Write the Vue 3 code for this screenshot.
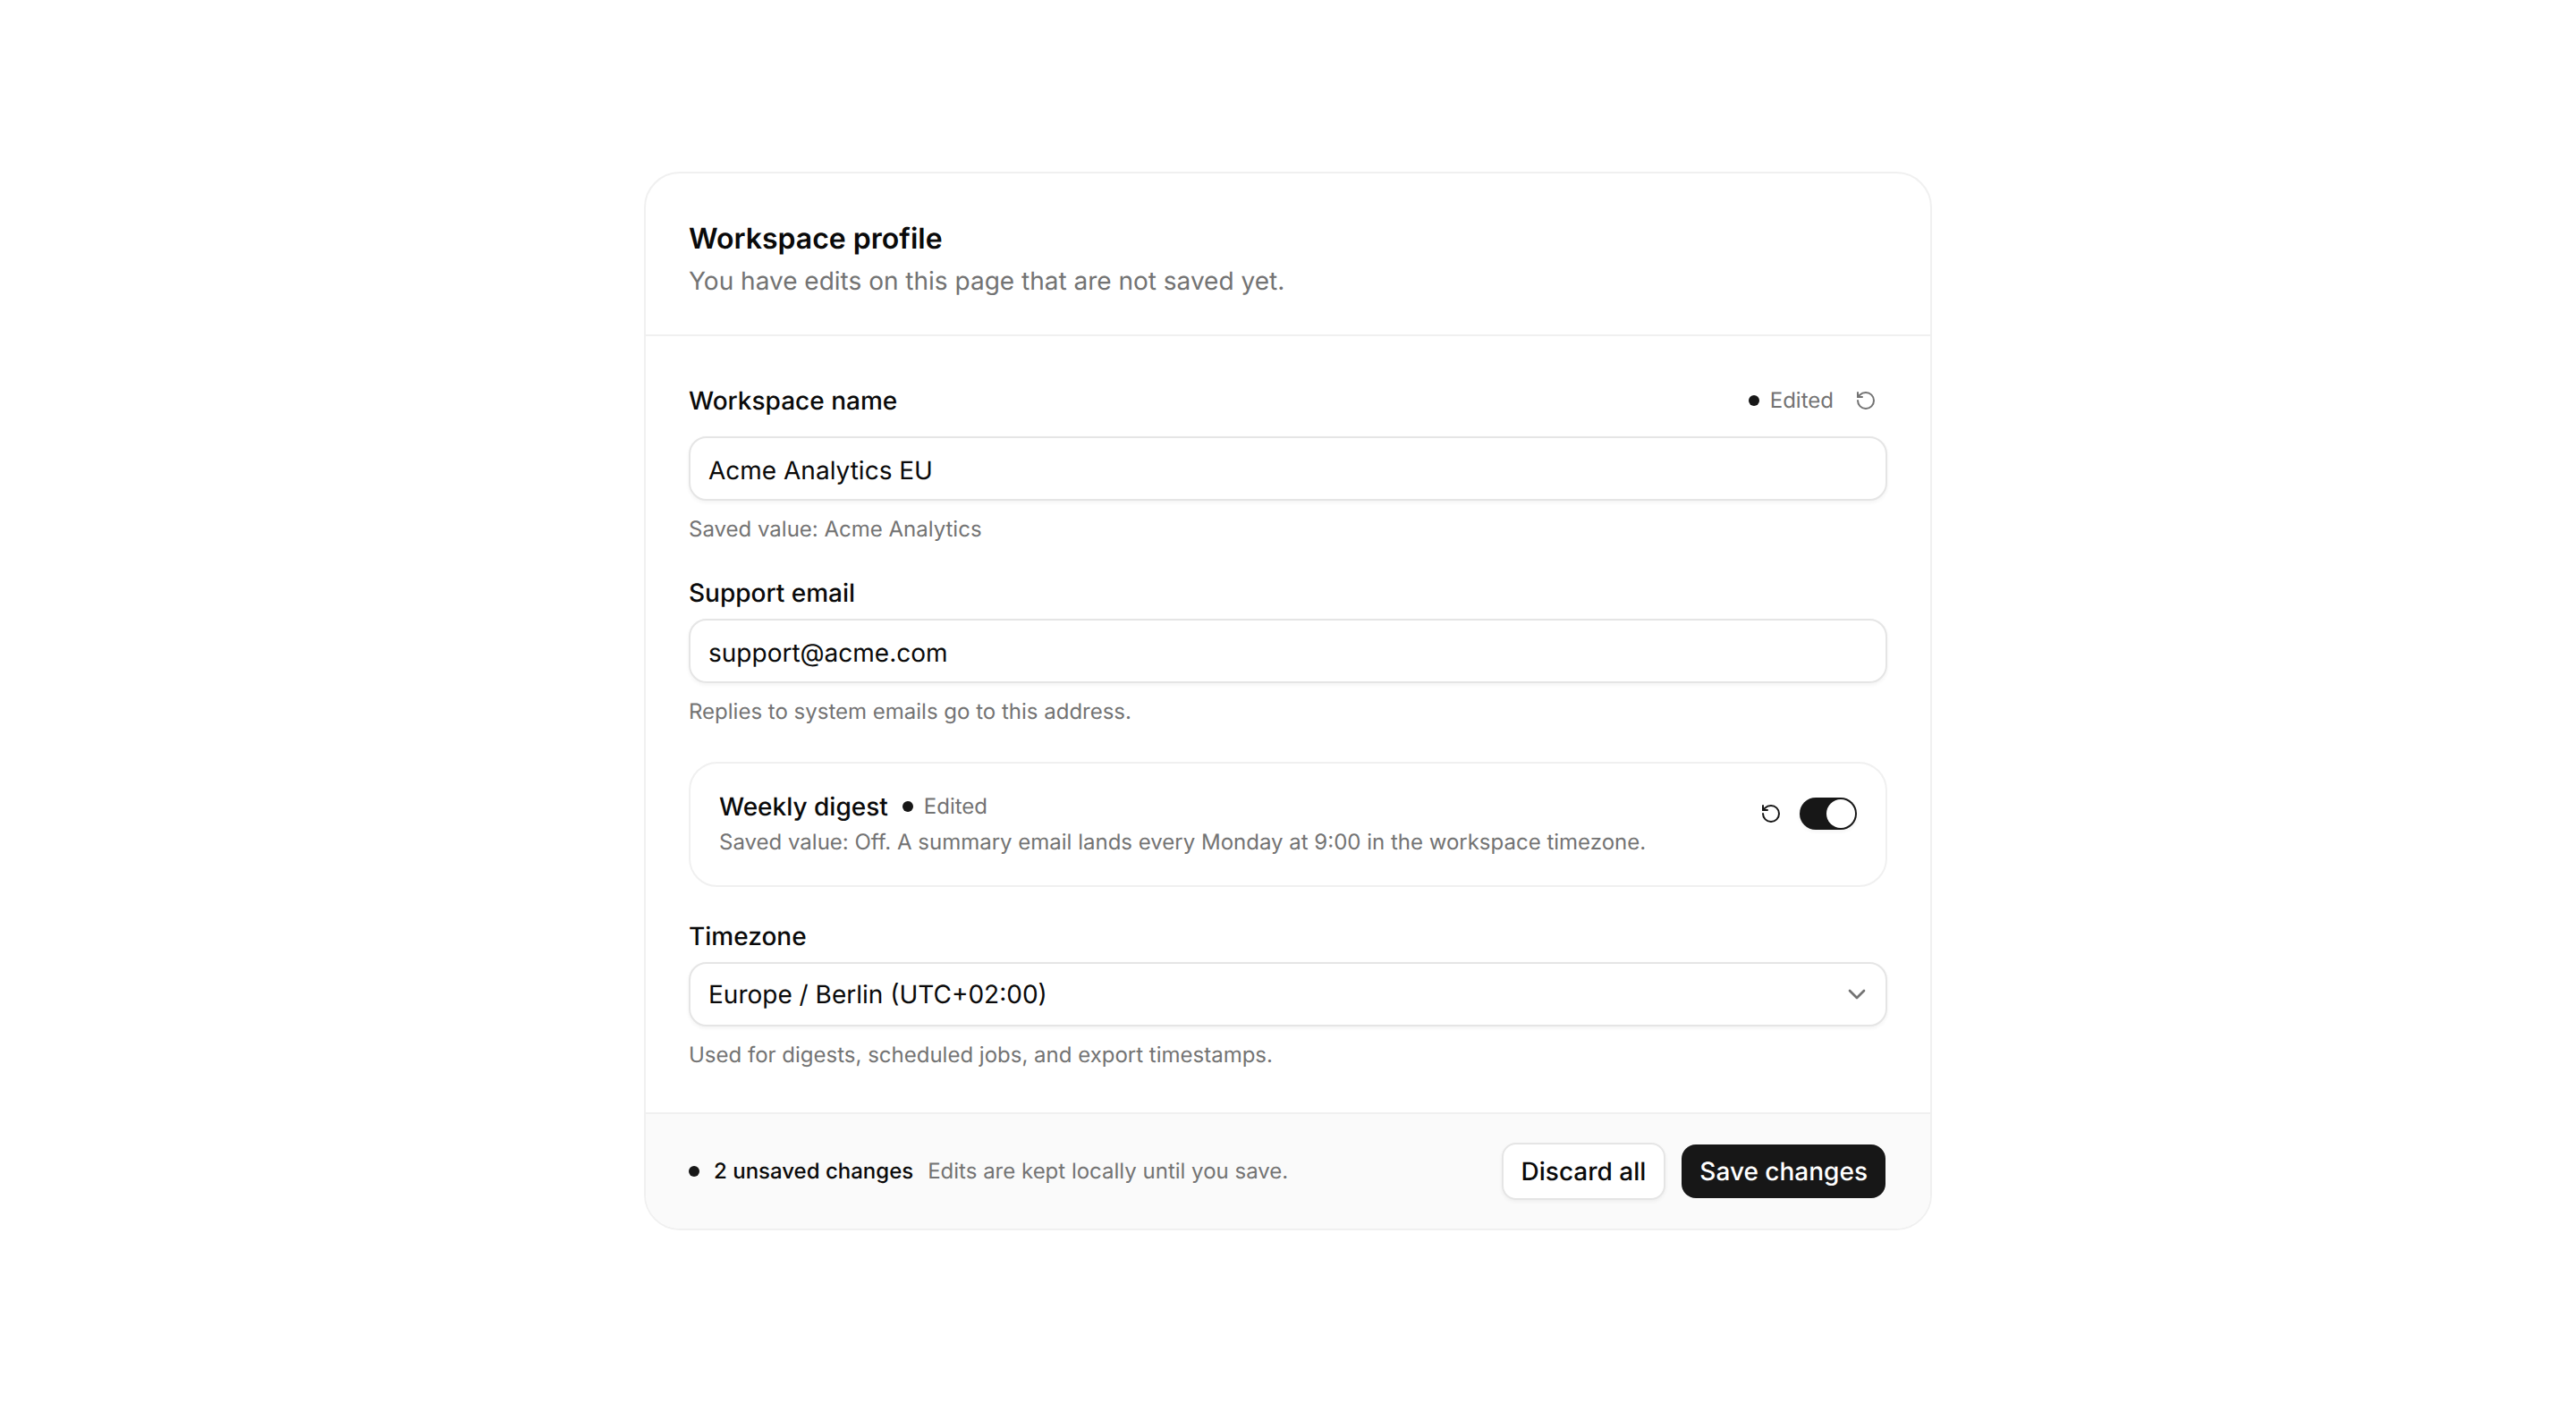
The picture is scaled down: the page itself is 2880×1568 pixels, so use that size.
<template>
  <div class="page">
    <section class="card">
      <header class="card-head">
        <h1 class="title">Workspace profile</h1>
        <p class="subtitle">You have edits on this page that are not saved yet.</p>
      </header>

      <div class="card-body">
        <div class="field">
          <div class="label-row">
            <label class="label">Workspace name</label>
            <div class="edited-wrap">
              <span class="dot"></span>
              <span class="edited">Edited</span>
              <button class="reset muted" type="button" aria-label="Reset">
                <svg viewBox="0 0 24 24" class="reset-icon">
                  <path d="M3 12a9 9 0 1 0 9-9 9.75 9.75 0 0 0-6.74 2.74L3 8" />
                  <path d="M3 3v5h5" />
                </svg>
              </button>
            </div>
          </div>
          <input class="input text-input" type="text" value="Acme Analytics EU" />
          <p class="help">Saved value: Acme Analytics</p>
        </div>

        <div class="field">
          <label class="label label-plain">Support email</label>
          <input class="input text-input" type="text" value="support@acme.com" />
          <p class="help">Replies to system emails go to this address.</p>
        </div>

        <div class="digest">
          <div class="digest-text">
            <div class="digest-head">
              <span class="digest-title">Weekly digest</span>
              <span class="dot"></span>
              <span class="edited">Edited</span>
            </div>
            <p class="digest-sub">Saved value: Off. A summary email lands every Monday at 9:00 in the workspace timezone.</p>
          </div>
          <div class="digest-controls">
            <button class="reset" type="button" aria-label="Reset">
              <svg viewBox="0 0 24 24" class="reset-icon">
                <path d="M3 12a9 9 0 1 0 9-9 9.75 9.75 0 0 0-6.74 2.74L3 8" />
                <path d="M3 3v5h5" />
              </svg>
            </button>
            <button class="toggle" type="button" :class="{ on: digest }" @click="digest = !digest">
              <span class="thumb"></span>
            </button>
          </div>
        </div>

        <div class="field">
          <label class="label label-plain">Timezone</label>
          <div class="select-wrap">
            <select class="input select">
              <option>Europe / Berlin (UTC+02:00)</option>
            </select>
            <svg class="chevron" viewBox="0 0 24 24">
              <path d="m6 9 6 6 6-6" />
            </svg>
          </div>
          <p class="help">Used for digests, scheduled jobs, and export timestamps.</p>
        </div>
      </div>

      <footer class="card-foot">
        <div class="foot-status">
          <span class="dot"></span>
          <span class="foot-count">2 unsaved changes</span>
          <span class="foot-note">Edits are kept locally until you save.</span>
        </div>
        <div class="foot-actions">
          <button class="btn btn-outline" type="button">Discard all</button>
          <button class="btn btn-dark" type="button">Save changes</button>
        </div>
      </footer>
    </section>
  </div>
</template>

<script setup>
import { ref } from 'vue'

const digest = ref(true)
</script>

<style>
html,
body {
  margin: 0;
  background: #fff;
}
</style>

<style scoped>
.page {
  min-height: 1568px;
  display: flex;
  align-items: center;
  justify-content: center;
  font-family: Inter, "Liberation Sans", sans-serif;
  text-rendering: geometricPrecision;
  color: #171717;
}

.card {
  width: 1440px;
  box-sizing: border-box;
  border: 2px solid #f0f0f0;
  border-radius: 40px;
  overflow: hidden;
  background: #fff;
}

.card-head {
  padding: 48px 48px 38px;
  border-bottom: 2px solid #f0f0f0;
}

.title {
  margin: 0;
  font-size: 32px;
  line-height: 50px;
  font-weight: 600;
  color: #0a0a0a;
}

.subtitle {
  margin: 0;
  font-size: 28px;
  line-height: 44px;
  color: #737373;
}

.card-body {
  padding: 48px;
}

.field + .field,
.digest + .field {
  margin-top: 36px;
}

.label-row {
  display: flex;
  align-items: center;
  justify-content: space-between;
  height: 48px;
  margin-bottom: 16px;
}

.label {
  font-size: 28px;
  line-height: 38px;
  font-weight: 500;
  color: #0a0a0a;
}

.label-plain {
  display: block;
  margin-bottom: 10px;
}

.edited-wrap {
  display: flex;
  align-items: center;
}

.dot {
  flex: none;
  width: 12px;
  height: 12px;
  border-radius: 50%;
  background: #171717;
}

.edited {
  margin-left: 12px;
  font-size: 24px;
  line-height: 32px;
  color: #737373;
}

.reset {
  display: flex;
  align-items: center;
  justify-content: center;
  width: 48px;
  height: 48px;
  margin-left: 12px;
  padding: 0;
  border: 0;
  background: none;
  color: #171717;
}

.reset.muted {
  color: #737373;
}

.reset-icon {
  width: 24px;
  height: 24px;
  fill: none;
  stroke: currentColor;
  stroke-width: 2;
  stroke-linecap: round;
  stroke-linejoin: round;
}

.input {
  display: block;
  width: 100%;
  height: 72px;
  box-sizing: border-box;
  padding: 0 20px;
  border: 2px solid #e5e5e5;
  border-radius: 20px;
  background: #fff;
  box-shadow: 0 2px 4px rgba(0, 0, 0, 0.05);
  font-family: inherit;
  font-size: 28px;
  text-rendering: geometricPrecision;
  color: #0a0a0a;
  outline: none;
}

.text-input {
  padding-top: 3px;
}

.select {
  appearance: none;
}

.select-wrap {
  position: relative;
}

.chevron {
  position: absolute;
  top: 20px;
  right: 18px;
  width: 32px;
  height: 32px;
  fill: none;
  stroke: #737373;
  stroke-width: 2;
  stroke-linecap: round;
  stroke-linejoin: round;
}

.help {
  margin: 16px 0 0;
  font-size: 24px;
  line-height: 32px;
  color: #737373;
}

.digest {
  display: flex;
  justify-content: space-between;
  align-items: flex-start;
  margin-top: 40px;
  padding: 32px;
  border: 2px solid #f0f0f0;
  border-radius: 32px;
}

.digest-head {
  display: flex;
  align-items: center;
  height: 32px;
}

.digest-title {
  margin-right: 16px;
  font-size: 28px;
  font-weight: 500;
  color: #0a0a0a;
}

.digest-sub {
  margin: 8px 0 0;
  font-size: 24px;
  line-height: 32px;
  color: #737373;
}

.digest-controls {
  display: flex;
  align-items: center;
  gap: 8px;
}

.digest-controls .reset {
  margin-left: 0;
}

.toggle {
  display: flex;
  align-items: center;
  justify-content: flex-start;
  width: 64px;
  height: 36px;
  padding: 2px;
  border: 0;
  border-radius: 18px;
  background: #171717;
  box-shadow: 0 2px 4px rgba(0, 0, 0, 0.05);
}

.toggle.on {
  justify-content: flex-end;
}

.thumb {
  width: 32px;
  height: 32px;
  border-radius: 50%;
  background: #fff;
}

.card-foot {
  display: flex;
  align-items: center;
  justify-content: space-between;
  padding: 32px 50px 32px 48px;
  border-top: 2px solid #f0f0f0;
  background: #fafafa;
}

.foot-status {
  display: flex;
  align-items: center;
}

.foot-count {
  margin-left: 16px;
  font-size: 24px;
  line-height: 32px;
  font-weight: 500;
  color: #0a0a0a;
}

.foot-note {
  margin-left: 16px;
  font-size: 24px;
  line-height: 32px;
  color: #737373;
}

.foot-actions {
  display: flex;
  align-items: center;
  gap: 18px;
}

.btn {
  box-sizing: border-box;
  border-radius: 16px;
  font-family: inherit;
  font-size: 28px;
  font-weight: 500;
  text-rendering: geometricPrecision;
}

.btn-outline {
  height: 64px;
  padding: 0 20px;
  border: 2px solid #e5e5e5;
  background: #fff;
  color: #0a0a0a;
  box-shadow: 0 2px 4px rgba(0, 0, 0, 0.05);
}

.btn-dark {
  height: 60px;
  padding: 0 20px;
  border: 0;
  background: #171717;
  color: #fff;
}
</style>
